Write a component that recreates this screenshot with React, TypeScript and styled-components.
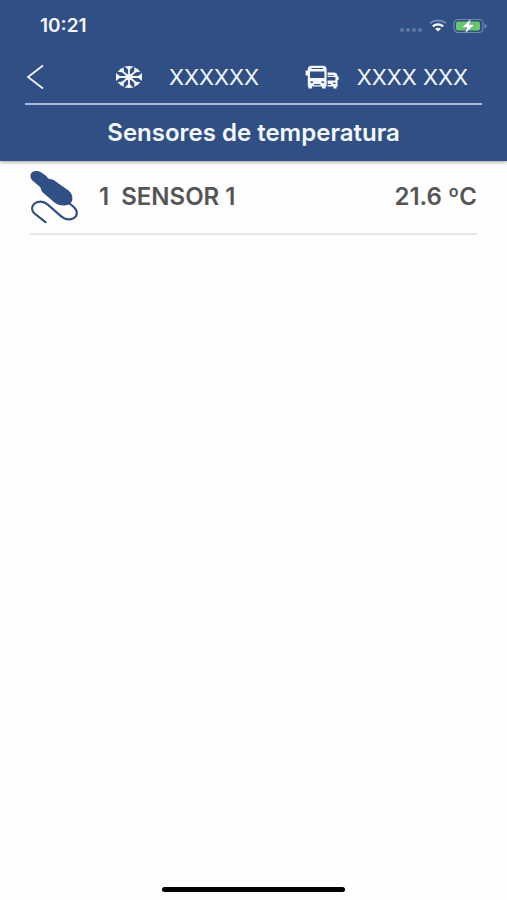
import React from "react";
import styled, { createGlobalStyle } from "styled-components";

const GlobalStyle = createGlobalStyle`
  * { box-sizing: border-box; }
  body {
    margin: 0;
    background: #fefefe;
    font-family: Inter, "Liberation Sans", sans-serif;
  }
`;

const Screen = styled.div`
  min-height: 100vh;
  display: flex;
  flex-direction: column;
`;

const Header = styled.header`
  background: #304f84;
  color: #f5f9ff;
  box-shadow: 0 1px 4px rgba(0, 0, 0, 0.4);
`;

const StatusBar = styled.div`
  height: 50px;
  padding: 2px 20px 0 40px;
  display: flex;
  align-items: center;
  justify-content: space-between;
`;

const Clock = styled.time`
  font-size: 19px;
  line-height: 24px;
  font-weight: 600;
`;

const StatusIcons = styled.div`
  display: flex;
  align-items: center;
  gap: 6px;
`;

const Icon = styled.svg`
  display: block;
  flex: none;
`;

const NavRow = styled.div`
  height: 55px;
  margin: 0 25px;
  display: flex;
  align-items: center;
  border-bottom: 2px solid #a9bbdc;
`;

const BackButton = styled.button`
  display: flex;
  padding: 0;
  border: 0;
  background: none;
  color: inherit;
  cursor: pointer;
`;

const NavItems = styled.div`
  flex: 1;
  display: flex;
  align-items: center;
  justify-content: space-between;
  padding: 0 14px 0 70px;
`;

const NavItem = styled.div<{ $gap: number }>`
  display: flex;
  align-items: center;
  gap: ${(p) => p.$gap}px;
  font-size: 22px;
  line-height: 28px;
  white-space: nowrap;
`;

const Title = styled.h1`
  margin: 0;
  padding: 14px 0;
  font-size: 24px;
  line-height: 28px;
  font-weight: 600;
  text-align: center;
`;

const SensorList = styled.ul`
  flex: 1;
  list-style: none;
  margin: 0;
  padding: 0 30px;
`;

const SensorRow = styled.li`
  height: 74px;
  display: flex;
  align-items: center;
  border-bottom: 2px solid #e8e8e8;
  color: #555;
  font-size: 24px;
  line-height: 28px;
  font-weight: 600;
  white-space: nowrap;
`;

const SensorNumber = styled.span`
  margin: 0 12px 0 20px;
`;

const SensorValue = styled.span`
  margin-left: auto;
`;

const HomeIndicator = styled.div`
  width: 36%;
  height: 5px;
  margin: 0 auto 8px;
  border-radius: 3px;
  background: #000;
`;

const SignalIcon = () => (
  <Icon width="24" height="16" viewBox="0 0 24 16" fill="#6078a6" aria-hidden="true">
    <circle cx="3" cy="12" r="2" />
    <circle cx="9" cy="12" r="2" />
    <circle cx="15" cy="12" r="2" />
    <circle cx="21" cy="12" r="2" />
  </Icon>
);

const WifiIcon = () => (
  <Icon width="18" height="16" viewBox="0 0 18 16" fill="none" aria-hidden="true">
    <path d="M1 5.2C5.5 1.7 12.5 1.7 17 5.2" stroke="#7189b5" strokeWidth="2" />
    <path d="M3.8 8.4C7 5.8 11 5.8 14.2 8.4" stroke="#fff" strokeWidth="2.2" />
    <path d="M6 10.8C7.8 9.4 10.2 9.4 12 10.8L9 13.6Z" fill="#fff" />
  </Icon>
);

const BatteryIcon = () => (
  <Icon width="34" height="16" viewBox="0 0 34 16" aria-hidden="true">
    <rect x="1" y="1.5" width="29" height="13" rx="4" fill="none" stroke="#7189b5" strokeWidth="1.2" />
    <rect x="3" y="3.5" width="24" height="9" rx="2" fill="#65c966" />
    <path d="M31.5 5.7C34.4 6.6 34.4 9.4 31.5 10.3Z" fill="#7189b5" />
    <path d="M18 0.8L8.6 9.5H13.8L12 15.4L21.8 6.6H16.6Z" fill="#fff" stroke="#304f84" strokeWidth="0.3" />
  </Icon>
);

const BackIcon = () => (
  <Icon width="20" height="26" viewBox="0 0 20 26" fill="none" stroke="currentColor" strokeWidth="1.7" aria-hidden="true">
    <path d="M18 1.5L3 13L18 24.5" />
  </Icon>
);

const SnowflakeIcon = () => (
  <Icon width="28" height="24" viewBox="0 0 28 24" fill="none" stroke="currentColor" strokeWidth="1.8" aria-hidden="true">
    <path d="M14 1V23M1 12H27M5 4.3L23 19.7M23 4.3L5 19.7" />
    <path
      fill="currentColor"
      stroke="none"
      d="M9.5 1.2H18.5L14 5.5ZM9.5 22.8H18.5L14 18.5ZM1 8V16L6 12ZM27 8V16L22 12ZM2.5 6.8L8.5 2L9 7.6ZM25.5 6.8L19.5 2L19 7.6ZM2.5 17.2L8.5 22L9 16.4ZM25.5 17.2L19.5 22L19 16.4Z"
    />
    <ellipse cx="14" cy="12" rx="2.8" ry="2.2" fill="currentColor" />
  </Icon>
);

const TruckIcon = () => (
  <Icon width="34" height="24" viewBox="0 0 34 24" aria-hidden="true">
    <path
      fill="currentColor"
      fillRule="evenodd"
      d="M6.5 0.8H18Q21.2 0.8 21.6 4V21.4H20.6V23.4H17V21.4H7V23.4H3.4V21.4H2.8V10.4H0.6V5.6H2.8V4Q3.2 0.8 6.5 0.8ZM6.5 3V4H18V3ZM5 6.4V13H19.4V6.4ZM5.4 16.4V18H8V16.4ZM16.4 16.4V18H19V16.4ZM9 19V20.2H15.4V19Z"
    />
    <path
      fill="currentColor"
      fillRule="evenodd"
      d="M22.6 7.6H28.8Q32 7.6 32.3 10.6V11.6H33.6V15H32.6V21.4H31.6V23.4H28.4V21.4H22.6ZM22.6 10V10.8H29V10ZM22.6 12V15.6H30.4V12ZM28.2 17.6V19H30.4V17.6ZM22.6 19V20H26V19Z"
    />
  </Icon>
);

const ProbeIcon = () => (
  <Icon width="49" height="54" viewBox="0 0 49 54" fill="none" aria-hidden="true">
    <path
      fill="#304f84"
      d="M0.6 5C1 1.5 6.5 0 10.5 2L16 5.8C17.5 7 17.5 8.6 19.5 9C21 9.4 22.5 9.2 24 10.2L38.5 20.5C41.5 22.8 42.6 26 42.4 29C42 33 38.5 35.6 34 35.4C30 35.5 27 34.2 24.5 32.4L12.5 22.2C10.6 20.4 11.4 18.4 9.8 16.8L2.4 10.4C0.9 9 0.3 7 0.6 5Z"
    />
    <path
      stroke="#304f84"
      strokeWidth="2.2"
      strokeLinecap="round"
      d="M39 33L44 37.2C48 41 47.6 46 43.5 48.3C39.5 50.2 35 49.5 31.5 46.7L17.5 34.4C13.5 30.8 7.5 30.7 4 34C1.3 37 1.6 40.7 4.5 43.5L15.5 52.2"
    />
  </Icon>
);

const sensors = [{ id: 1, name: "SENSOR 1", value: "21.6 ºC" }];

export default function App() {
  return (
    <Screen>
      <GlobalStyle />
      <Header>
        <StatusBar>
          <Clock>10:21</Clock>
          <StatusIcons>
            <SignalIcon />
            <WifiIcon />
            <BatteryIcon />
          </StatusIcons>
        </StatusBar>
        <NavRow>
          <BackButton type="button" aria-label="Volver">
            <BackIcon />
          </BackButton>
          <NavItems>
            <NavItem $gap={26}>
              <SnowflakeIcon />
              XXXXXX
            </NavItem>
            <NavItem $gap={18}>
              <TruckIcon />
              XXXX XXX
            </NavItem>
          </NavItems>
        </NavRow>
        <Title>Sensores de temperatura</Title>
      </Header>
      <SensorList>
        {sensors.map((s) => (
          <SensorRow key={s.id}>
            <ProbeIcon />
            <SensorNumber>{s.id}</SensorNumber>
            <span>{s.name}</span>
            <SensorValue>{s.value}</SensorValue>
          </SensorRow>
        ))}
      </SensorList>
      <HomeIndicator />
    </Screen>
  );
}
